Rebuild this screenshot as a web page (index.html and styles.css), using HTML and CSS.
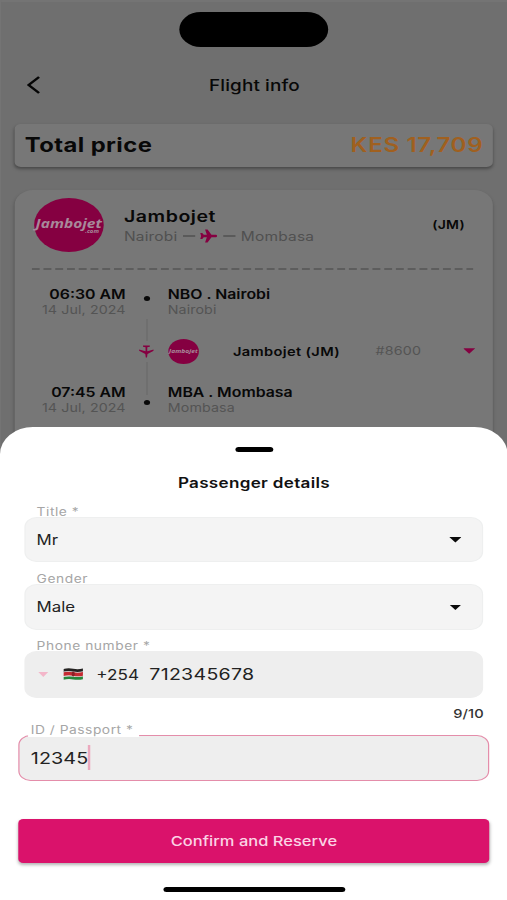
FILE: index.html
```html
<!DOCTYPE html>
<html lang="en">
<head>
<meta charset="utf-8">
<title>Flight info</title>
<link rel="stylesheet" href="styles.css">
</head>
<body>
<div class="phone">
  <main class="page">
    <div class="island"></div>
    <header class="bar">
      <svg class="back" viewBox="0 0 11 18"><path d="M10 1 L1.5 9 L10 17"/></svg>
      <h1>Flight info</h1>
    </header>
    <section class="price">
      <span class="price-label">Total price</span>
      <span class="price-value">KES 17,709</span>
    </section>
    <section class="flight">
      <div class="airline">
        <div class="logo"><span class="logo-name">Jambojet</span><span class="logo-com">.com</span></div>
        <div class="airline-text">
          <div class="airline-name">Jambojet</div>
          <div class="route"><span>Nairobi</span><i class="line"></i>
            <svg class="plane" viewBox="0 0 24 24"><path d="M24 12c0-1.300-1.200-2.200-2.500-2.200H16L10.500 1H7l2.500 8.800H5.200L3 7H.2L1.500 12 .2 17H3l2.200-2.800h4.300L7 23h3.500l5.500-8.800h5.500c1.300 0 2.500-.9 2.500-2.200z"/></svg>
            <i class="line"></i><span>Mombasa</span></div>
        </div>
        <div class="code">(JM)</div>
      </div>
      <svg class="dashes" viewBox="0 0 362 2"><path d="M0 1H362"/></svg>
      <div class="leg">
        <div class="when"><b>06:30 AM</b><span>14 Jul, 2024</span></div>
        <div class="mark"><i class="dot"></i></div>
        <div class="where"><b>NBO . Nairobi</b><span>Nairobi</span></div>
      </div>
      <div class="carrier">
        <div class="track"><i class="seg"></i>
          <svg class="plane-down" viewBox="0 0 12 13"><path d="M3.200 .5H8.800V1.700L6.700 2.300V6.300L12 4.600V5.800L6.900 9 6.500 12.500H5.500L5.100 9 0 5.800V4.600L5.300 6.300V2.300L3.200 1.700z"/></svg>
          <i class="seg"></i></div>
        <div class="logo small"><span class="logo-name">Jambojet</span></div>
        <b class="carrier-name">Jambojet (JM)</b>
        <span class="number">#8600</span>
        <i class="caret pink"></i>
      </div>
      <div class="leg last">
        <div class="when"><b>07:45 AM</b><span>14 Jul, 2024</span></div>
        <div class="mark"><i class="seg short"></i><i class="dot"></i></div>
        <div class="where"><b>MBA . Mombasa</b><span>Mombasa</span></div>
      </div>
    </section>
  </main>
  <section class="sheet">
    <div class="handle"></div>
    <h2>Passenger details</h2>
    <label class="label">Title *</label>
    <div class="field select"><span>Mr</span><i class="caret"></i></div>
    <label class="label gap">Gender</label>
    <div class="field select"><span>Male</span><i class="caret"></i></div>
    <label class="label gap phone-label">Phone number *</label>
    <div class="field tel">
      <i class="caret pale"></i>
      <svg class="flag" viewBox="0 0 16 12"><path fill="#252322" d="M0 1Q4-.2 8 .8T16 .5V4H0z"/><path fill="#ddd" d="M0 3.500Q4 2.500 8 3.500T16 3.200V9H0z"/><path fill="#c52b32" d="M0 4.200Q4 3.200 8 4.200T16 3.900V7.700Q12 8.700 8 7.700T0 8z"/><path fill="#27863b" d="M0 9Q4 8 8 8.700T16 8.400V11.300Q12 12.300 8 11.400T0 11.700z"/><ellipse cx="8" cy="6" rx="1.300" ry="2.400" fill="#8c2027"/></svg>
      <span class="prefix">+254</span><span class="digits">712345678</span>
    </div>
    <div class="count">9/10</div>
    <div class="field id">
      <label class="id-label">ID / Passport *</label>
      <span>12345</span><i class="cursor"></i>
    </div>
    <button class="confirm">Confirm and Reserve</button>
    <div class="home"></div>
  </section>
</div>
</body>
</html>
```
FILE: styles.css
```css
* { box-sizing: border-box; }
body { margin: 0; overflow: hidden; background: #fff; }

/* The whole screen is drawn narrow and widened to the window. */
.phone {
  width: 415.57px;
  height: 900px;
  transform: scaleX(1.22);
  transform-origin: 0 0;
  font-family: Inter, "Liberation Sans", sans-serif;
  color: #111;
  white-space: nowrap;
}
i { display: block; flex: none; }
svg { display: block; flex: none; }

.page {
  height: 460px;
  padding: 10px 11.500px 0 11px;
  background: #6f6f6f;
  border-top: 2px solid #747474;
  border-left: 1.500px solid #747474;
  overflow: hidden;
  color: #080808;
}
.island { width: 121.300px; height: 35px; margin: 0 auto; border-radius: 18px; background: #000; }
.bar { height: 77px; padding-bottom: 1px; display: grid; grid-template-columns: 1fr auto 1fr; align-items: center; }
.back { width: 11px; height: 18px; margin-left: 9.500px; fill: none; stroke: #050505; stroke-width: 2.200; }
h1 { margin: 0; font-size: 15.500px; font-weight: 500; letter-spacing: .1px; grid-column: 2; padding-left: 1px; }

.price {
  height: 43px;
  padding: 0 8px 1.500px 8.300px;
  display: flex;
  justify-content: space-between;
  align-items: center;
  border-radius: 5px;
  background: #777;
  box-shadow: 0 2px 3px rgba(0, 0, 0, .35);
  font-size: 19.500px;
  font-weight: 700;
  letter-spacing: .35px;
}
.price-value { color: #a0601f; font-weight: 600; font-size: 19.800px; letter-spacing: .5px; }

.flight {
  margin-top: 23px;
  height: 290px;
  padding-top: 8px;
  border-radius: 15px 15px 0 0;
  background: #777;
  box-shadow: 0 2px 3px rgba(0, 0, 0, .25);
}
.airline { display: flex; height: 70px; padding: 0 23px 0 15.500px; }
.logo {
  width: 57.600px; height: 54px; flex: none;
  border-radius: 50%;
  background: #850041;
  color: #a8899a;
  font-family: "Open Sans", sans-serif;
  font-style: italic;
  font-weight: 700;
  display: flex; flex-direction: column; align-items: center; justify-content: center;
}
.logo-name { font-size: 12.700px; line-height: 14px; }
.logo-com { font-size: 5px; line-height: 5px; margin: -1px 4px 0 0; align-self: flex-end; }
.airline-text { margin-left: 16.500px; padding-top: 7px; flex: 1; }
.airline-name { font-size: 16px; font-weight: 600; line-height: 22px; letter-spacing: .45px; }
.route { display: flex; align-items: center; height: 18px; font-size: 12.700px; color: #505050; letter-spacing: .15px; }
.line { width: 10px; height: 1.200px; background: #5a5a5a; margin: 0 4.500px; }
.plane { width: 14px; height: 14px; fill: #850041; }
.code { font-size: 11.500px; font-weight: 600; line-height: 54px; letter-spacing: .2px; }
.dashes { width: 362px; height: 2px; margin-left: 13.500px; stroke: #565656; stroke-width: 1.500; stroke-dasharray: 6.500 3.130; }

.leg { display: grid; grid-template-columns: 91px 34.500px 1fr; height: 48px; padding-top: 16px; }
.when { text-align: right; }
.when b, .where b { display: block; font-size: 13px; font-weight: 600; line-height: 17px; }
.when span, .where span { display: block; font-size: 11.700px; line-height: 14px; letter-spacing: .08px; color: #545454; }
.mark { display: flex; flex-direction: column; align-items: center; padding-top: 9.500px; }
.dot { width: 5px; height: 5px; border-radius: 50%; background: #080808; }
.carrier { display: flex; align-items: center; height: 66px; padding: 0 14.500px 0 101px; }
.track { width: 14px; display: flex; flex-direction: column; align-items: center; gap: 4px; margin-right: 10.500px; }
.seg { width: 1px; height: 22px; background: #6a6a6a; }
.seg.short { height: 11px; margin-bottom: 4.500px; }
.plane-down { width: 12px; height: 13px; fill: #850041; }
.small { width: 25.500px; height: 25px; }
.small .logo-name { font-size: 5.500px; }
.carrier-name { font-size: 12px; font-weight: 600; letter-spacing: .28px; margin-left: 28px; }
.number { font-size: 11.700px; color: #545454; letter-spacing: .2px; margin-left: 29px; }
.caret { width: 10px; height: 5.500px; background: #0a0a0a; clip-path: polygon(0 0, 100% 0, 50% 100%); }
.pink { background: #850041; margin-left: auto; }
.pale { background: #f3b6c9; width: 9px; }
.last { padding-top: 0; }
.last .mark { padding-top: 0; }

.sheet {
  position: relative;
  height: 473px;
  margin-top: -33px;
  padding: 20px 14.500px 0 15.200px;
  border-radius: 27px 27px 0 0;
  background: #fff;
}
.handle { width: 31px; height: 4.500px; margin: 0 auto; border-radius: 3px; background: #000; }
h2 { margin: 21px 0 0; font-size: 14px; line-height: 20px; font-weight: 600; letter-spacing: .25px; text-align: center; }
.label { display: block; margin: 8px 14.800px 0; height: 16px; line-height: 22.500px; font-size: 11.300px; color: #a6a6a6; letter-spacing: .45px; }
.gap { margin-top: 6px; }
.phone-label { margin-top: 5.500px; }
.field { height: 45.500px; margin: 0 4.800px; padding: 0 9.200px; display: flex; align-items: center; border-radius: 10px; background: #f4f4f4; border: 1px solid #eeefef; font-size: 13.800px; color: #222; }
.select { justify-content: space-between; padding: 1px 17px 0 9px; }
.tel { background: #eee; border-color: #eee; height: 46.500px; padding-left: 10px; }
.flag { width: 16px; height: 12px; margin: 0 11px 0 12px; }
.digits { margin-left: 8.500px; font-size: 16px; letter-spacing: .25px; }
.prefix { font-size: 14px; }
.count { height: 37px; line-height: 32px; text-align: right; margin-right: 4.500px; font-size: 12px; font-weight: 500; color: #333; letter-spacing: .1px; }
.id { position: relative; margin: 0; height: 46px; background: #eee; border: 1.300px solid #e48daa; font-size: 16.200px; padding: 0 9px; letter-spacing: .1px; }
.id-label { position: absolute; left: 7px; top: -15px; height: 16px; padding: 0 3px 0 2px; width: 90.500px; background: #fff; line-height: 18px; font-size: 11.300px; color: #a6a6a6; letter-spacing: .43px; }
.cursor { width: 1.700px; height: 25px; background: #eba9be; }
.confirm { display: block; width: 100%; height: 43.500px; margin: 38.500px 0 24px; padding: 0; border: 0; border-radius: 4px; background: #da126b; box-shadow: 0 2px 3px rgba(0, 0, 0, .3); color: #fbd3e5; font: 500 13.500px Inter, sans-serif; letter-spacing: .02px; }
.home { width: 149px; height: 5px; margin: 0 auto; border-radius: 3px; background: #000; }
```
